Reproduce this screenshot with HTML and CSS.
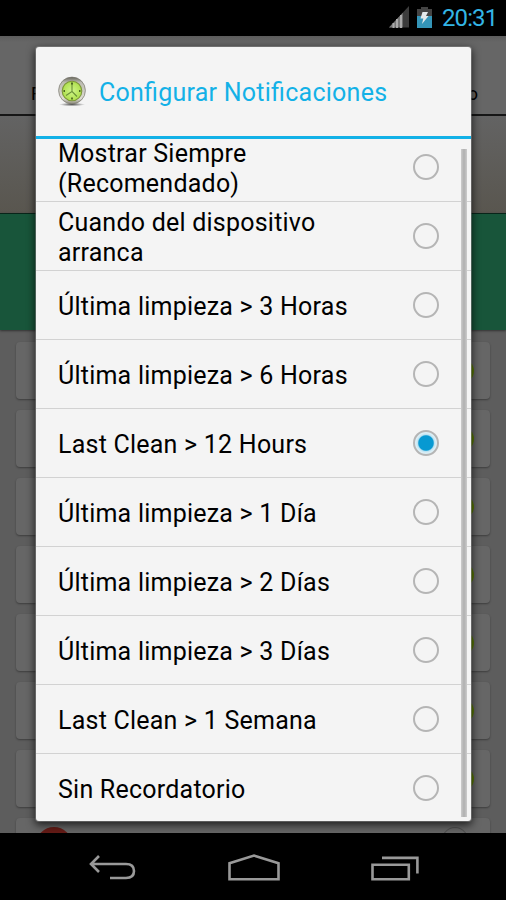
FILE: index.html
```html
<!DOCTYPE html>
<html lang="es">
<head>
<meta charset="utf-8">
<title>Configurar Notificaciones</title>
<link rel="stylesheet" href="styles.css">
</head>
<body>
<div class="phone">
  <header class="status">
    <svg class="signal" width="20" height="22" viewBox="0 0 20 22"><path d="M0 21.5L20 0V21.5Z" fill="#3c3c3c"/><path d="M0 21.5L13.8 6.7V21.5Z" fill="#777"/><path d="M4.5 17V22M8 13V22M12 9V22" stroke="#aaa" stroke-width="2"/></svg>
    <svg class="battery" width="15" height="23" viewBox="0 0 15 23"><path d="M4 1H11V3H15V22H0V3H4Z" fill="#444"/><path d="M0 10H15V22H0Z" fill="#3495b8"/><path d="M5.5 6H11L9 10H11.5L5 18L6.3 12.5H3.5Z" fill="#e4e9eb"/></svg>
    <span class="time">20:31</span>
  </header>
  <main class="app">
    <div class="tabs"><span>F</span><span>o</span></div>
    <div class="banner"></div>
    <div class="green"></div>
    <div class="cards">
      <div class="card"><i class="dot"></i></div>
      <div class="card"><i class="dot"></i></div>
      <div class="card"><i class="dot"></i></div>
      <div class="card"><i class="dot"></i></div>
      <div class="card"><i class="dot"></i></div>
      <div class="card"><i class="dot"></i></div>
      <div class="card"><i class="dot"></i></div>
      <div class="card last"><i class="red"></i><i class="ring"></i></div>
    </div>
  </main>
  <nav class="nav">
    <svg width="48" height="28" viewBox="0 0 48 28"><path d="M11 2L3 10L11 18M3 10H38Q46 10 46 17T38 24H22" fill="none" stroke="#999" stroke-width="2.6"/></svg>
    <svg width="52" height="28" viewBox="0 0 52 28"><path d="M1.5 25.2V9.3L26 1.6L50.5 9.3V25.2Z" fill="none" stroke="#999" stroke-width="2.6"/></svg>
    <svg width="48" height="28" viewBox="0 0 48 28"><path d="M1.5 10.8H37.8V25.2H1.5ZM11 3.9H46.4V19.5" fill="none" stroke="#999" stroke-width="2.6"/></svg>
  </nav>
  <section class="dialog">
    <div class="title">
      <svg class="clock" width="28" height="31" viewBox="0 0 28 31">
        <defs>
          <linearGradient id="rim" x1="0" y1="0" x2="0" y2="1"><stop offset="0" stop-color="#66655b"/><stop offset=".2" stop-color="#bcbbb1"/><stop offset=".8" stop-color="#dedcd3"/><stop offset="1" stop-color="#898777"/></linearGradient>
          <radialGradient id="face"><stop offset="0" stop-color="#d0f58a"/><stop offset="1" stop-color="#aee04c"/></radialGradient>
          <radialGradient id="shade"><stop offset="0" stop-color="#555"/><stop offset="1" stop-color="#555" stop-opacity="0"/></radialGradient>
        </defs>
        <ellipse cx="14" cy="28.5" rx="13" ry="1.8" fill="url(#shade)"/>
        <circle cx="14" cy="14.5" r="13.4" fill="url(#rim)" stroke="#77766d" stroke-width=".7"/>
        <circle cx="14" cy="15" r="9.8" fill="url(#face)" stroke="#7c9638" stroke-width="1.1"/>
        <path d="M14 8V15.5L19 20.5M14 15.5L8 19.5" fill="none" stroke="#6b9138" stroke-width="1.1"/>
        <path d="M13 7.5H15M14 21.5V23.5M5.5 15H7M21 15H22.5" stroke="#4e6822" stroke-width="1.8"/>
      </svg>
      <h1>Configurar Notificaciones</h1>
    </div>
    <div class="list">
      <div class="row first"><span>Mostrar Siempre<br>(Recomendado)</span><i class="radio"></i></div>
      <div class="row"><span>Cuando del dispositivo<br>arranca</span><i class="radio"></i></div>
      <div class="row"><span>Última limpieza &gt; 3 Horas</span><i class="radio"></i></div>
      <div class="row"><span>Última limpieza &gt; 6 Horas</span><i class="radio"></i></div>
      <div class="row"><span>Last Clean &gt; 12 Hours</span><i class="radio on"></i></div>
      <div class="row"><span>Última limpieza &gt; 1 Día</span><i class="radio"></i></div>
      <div class="row"><span>Última limpieza &gt; 2 Días</span><i class="radio"></i></div>
      <div class="row"><span>Última limpieza &gt; 3 Días</span><i class="radio"></i></div>
      <div class="row"><span>Last Clean &gt; 1 Semana</span><i class="radio"></i></div>
      <div class="row"><span>Sin Recordatorio</span><i class="radio"></i></div>
      <div class="scrollbar"></div>
    </div>
  </section>
</div>
</body>
</html>
```
FILE: styles.css
```css
* { box-sizing: border-box; }
body { margin: 0; background: #000; font-family: Roboto, "Liberation Sans", sans-serif; }
.phone { position: relative; width: 506px; height: 900px; overflow: hidden; display: flex; flex-direction: column; background: #000; }
.status { height: 36px; flex: none; display: flex; justify-content: flex-end; align-items: flex-start; padding: 6px 10px 0 0; }
.signal { margin-right: 8px; }
.battery { margin-right: 10px; }
.time { color: #33b5e5; font-size: 24px; line-height: 25px; letter-spacing: -.9px; width: 54px; white-space: nowrap; }
.app { flex: none; height: 797px; overflow: hidden; background: #5d5d5d; }
.tabs { height: 80px; background: linear-gradient(#5c5c5c, #666 6px, #666); border-bottom: 2px solid #161616; display: flex; justify-content: space-between; padding: 47px 28px 0 31px; font-size: 18px; line-height: 22px; color: #000; }
.banner { height: 97px; background: linear-gradient(#636363, #59564f); }
.green { height: 117px; border-top: 1px solid #082519; background: #18553a; box-shadow: 0 1px 2px #333; }
.cards { display: flex; flex-direction: column; gap: 11px; padding: 12px 16px 0; }
.card { height: 57px; flex: none; border-radius: 4px; background: #666; box-shadow: 0 1px 2px rgba(0,0,0,.35); display: flex; justify-content: flex-end; align-items: center; padding-right: 16px; }
.dot { width: 24px; height: 24px; border-radius: 50%; background: #587800; }
.last { justify-content: space-between; align-items: flex-start; padding: 9px 20px 0 20px; }
.red, .ring { width: 36px; height: 36px; border-radius: 50%; }
.red { background: #651b16; }
.ring { width: 30px; border: 1px solid #505050; }
.nav { height: 67px; flex: none; display: flex; align-items: flex-start; justify-content: space-between; padding: 21px 87px 0 88px; }
.dialog { position: absolute; left: 36px; top: 47px; width: 435px; height: 774px; display: flex; flex-direction: column; border-radius: 3px; background: #f4f4f4; box-shadow: 0 0 0 1px rgba(150,150,150,.45), 0 3px 8px 1px rgba(0,0,0,.7); }
.title { height: 92px; flex: none; display: flex; align-items: center; padding-left: 22px; border-bottom: 3px solid #13b1e7; }
.clock { margin-right: 13px; }
h1 { margin: 2px 0 0; color: #13b1e7; font-size: 25px; font-weight: 400; line-height: 30px; letter-spacing: .25px; font-feature-settings: "liga" 1; white-space: nowrap; }
.list { position: relative; flex: 1; min-height: 0; overflow: hidden; }
.row { height: 68.9px; display: flex; align-items: center; justify-content: space-between; padding: 0 32px 0 22px; border-bottom: 1px solid #d2d2d2; font-size: 25px; line-height: 30px; letter-spacing: .23px; color: #000; white-space: nowrap; }
.row span { padding-top: 4px; }
.first { height: 63.4px; }
.first span { margin-top: -5.5px; }
.first .radio { margin-top: -5.5px; }
.row:nth-child(10) { border-bottom: 0; }
.radio { width: 26px; height: 26px; flex: none; border: 2px solid #b5b5b5; border-radius: 50%; }
.on { background: radial-gradient(circle, #0799d2 0 7.2px, #bde2f1 8.4px, #dceef5 10px); }
.scrollbar { position: absolute; right: 4px; top: 10px; width: 6px; height: 668px; background: linear-gradient(90deg, #ccc, #b4b4b4 40%, #b4b4b4 60%, #ccc); }
```
